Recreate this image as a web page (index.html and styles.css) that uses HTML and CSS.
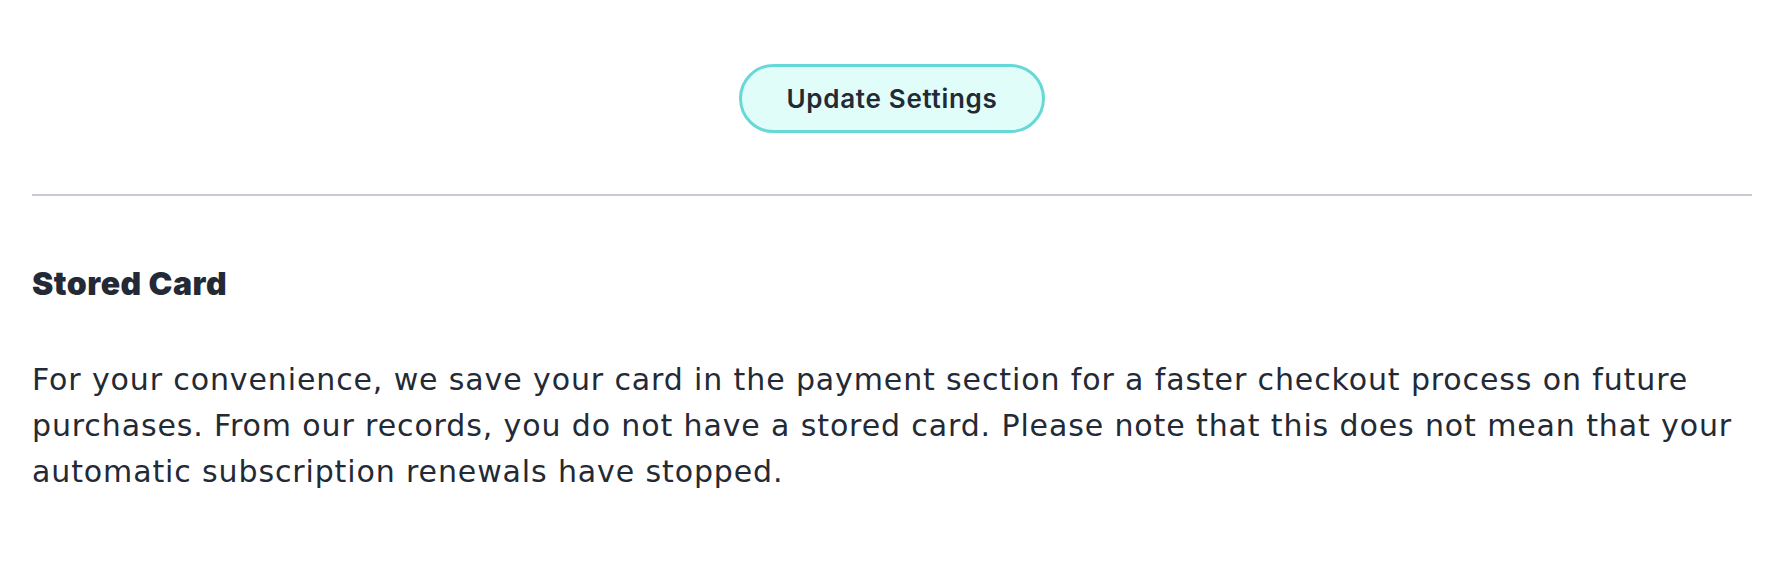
FILE: index.html
```html
<!DOCTYPE html>
<html>

<head>
    <meta charset="UTF-8">
    <title>Account - Stored Card</title>
    <link rel="stylesheet" href="styles.css">
</head>

<body>
    <div class="page">
        <div class="actions">
            <button class="btn-update" type="button">Update Settings</button>
        </div>

        <hr class="divider">

        <section class="stored-card">
            <h3>Stored Card</h3>
            <p>For your convenience, we save your card in the payment section for a faster checkout process on future
                purchases. From our records, you do not have a stored card. Please note that this does not mean that your
                automatic subscription renewals have stopped.</p>
        </section>
    </div>
</body>

</html>
```
FILE: styles.css
```css
body {
    margin: 0;
    background: #fff;
    color: #232a35;
    font-family: Inter, "Open Sans", sans-serif;
}

.page {
    padding: 64px 14px 0 32px;
}

.actions {
    display: flex;
    justify-content: center;
}

.btn-update {
    height: 69px;
    padding: 0 45px;
    border: 3px solid #66d9d6;
    border-radius: 35px;
    background-color: #e1fdf9;
    color: #232a35;
    font-family: inherit;
    font-size: 26px;
    font-weight: 600;
    letter-spacing: 0.7px;
    cursor: pointer;
}

.divider {
    margin: 61px 0 0;
    border: none;
    height: 2px;
    background-color: #c9cad4;
}

.stored-card h3 {
    margin: 68px 0 0;
    font-size: 32px;
    line-height: 40px;
    font-weight: 900;
    letter-spacing: 0.5px;
}

.stored-card p {
    margin: 53px 0 0;
    font-family: "DejaVu Sans", sans-serif;
    font-size: 30px;
    line-height: 46px;
    letter-spacing: 0.88px;
}
```
